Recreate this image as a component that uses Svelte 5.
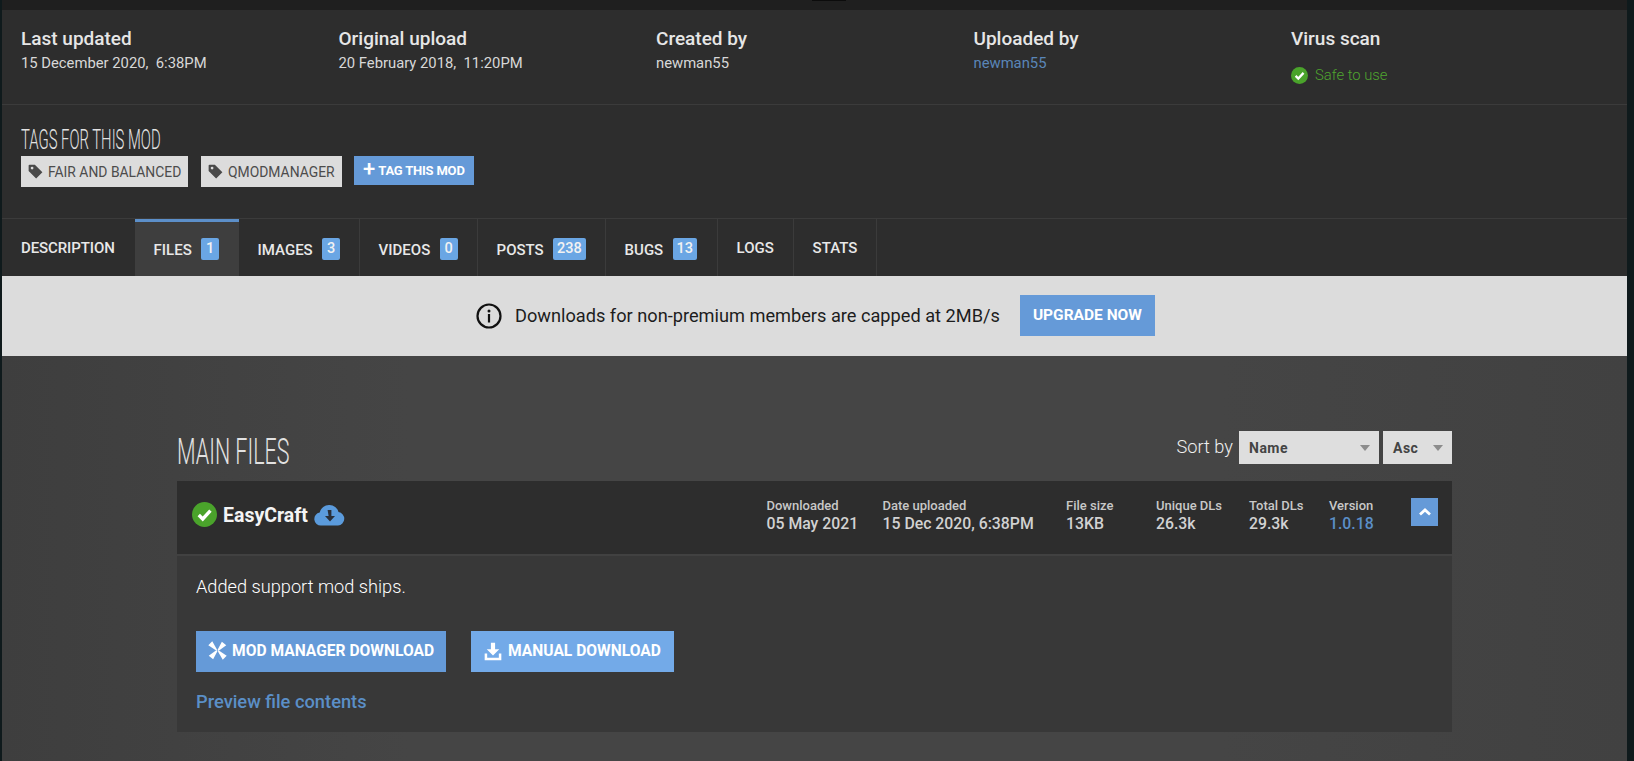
<script>
  const meta = [
    { label: 'Last updated', value: '15 December 2020,  6:38PM' },
    { label: 'Original upload', value: '20 February 2018,  11:20PM' },
    { label: 'Created by', value: 'newman55' },
    { label: 'Uploaded by', value: 'newman55', link: true }
  ];
  const tabs = [
    { name: 'DESCRIPTION', w: 133 },
    { name: 'FILES', count: '1', w: 104, active: true },
    { name: 'IMAGES', count: '3', w: 121 },
    { name: 'VIDEOS', count: '0', w: 118 },
    { name: 'POSTS', count: '238', w: 128 },
    { name: 'BUGS', count: '13', w: 112 },
    { name: 'LOGS', w: 76 },
    { name: 'STATS', w: 83 }
  ];
  const stats = [
    { label: 'Downloaded', value: '05 May 2021', w: 116 },
    { label: 'Date uploaded', value: '15 Dec 2020, 6:38PM', w: 183.5 },
    { label: 'File size', value: '13KB', w: 90 },
    { label: 'Unique DLs', value: '26.3k', w: 93 },
    { label: 'Total DLs', value: '29.3k', w: 80 },
    { label: 'Version', value: '1.0.18', w: 82, link: true }
  ];
</script>

<div class="page">
  <div class="topbar"><span class="topbar-mark"></span></div>
  <section class="meta">
    {#each meta as m}
      <div class="meta-col">
        <div class="meta-label">{m.label}</div>
        <div class="meta-value" class:link={m.link}>{m.value}</div>
      </div>
    {/each}
    <div class="meta-col">
      <div class="meta-label">Virus scan</div>
      <div class="safe">
        <svg width="17" height="17" viewBox="0 0 24 24"><circle cx="12" cy="12" r="12" fill="#4aa32b"/><path d="M6.5 12.5l3.8 3.8 7.4-8" fill="none" stroke="#fff" stroke-width="3.2"/></svg>
        <span>Safe to use</span>
      </div>
    </div>
  </section>

  <section class="tags">
    <h2 class="tags-title"><span>TAGS FOR THIS MOD</span></h2>
    <div class="tag-row">
      <span class="chip chip-a">
        <svg width="15" height="15" viewBox="0 0 24 24"><path d="M1 2.5A1.5 1.5 0 0 1 2.5 1H11l12 12-10 10L1 11z" fill="#4a4a4a"/><circle cx="6.5" cy="6.5" r="2.2" fill="#dcdcdc"/></svg>
        FAIR AND BALANCED
      </span>
      <span class="chip chip-b">
        <svg width="15" height="15" viewBox="0 0 24 24"><path d="M1 2.5A1.5 1.5 0 0 1 2.5 1H11l12 12-10 10L1 11z" fill="#4a4a4a"/><circle cx="6.5" cy="6.5" r="2.2" fill="#dcdcdc"/></svg>
        QMODMANAGER
      </span>
      <span class="add-tag"><b>+</b><i>TAG THIS MOD</i></span>
    </div>
  </section>

  <nav class="tabs">
    {#each tabs as t}
      <div class="tab" class:active={t.active} class:plain={!t.count} style="width:{t.w}px">
        <span>{t.name}</span>
        {#if t.count}<em>{t.count}</em>{/if}
      </div>
    {/each}
  </nav>

  <section class="banner">
    <svg width="26" height="26" viewBox="0 0 26 26"><circle cx="13" cy="13" r="11.5" fill="none" stroke="#111" stroke-width="2.2"/><circle cx="13" cy="8" r="1.5" fill="#111"/><rect x="11.9" y="11" width="2.2" height="8.5" fill="#111"/></svg>
    <span class="banner-text">Downloads for non-premium members are capped at 2MB/s</span>
    <span class="upgrade">UPGRADE NOW</span>
  </section>

  <main class="main">
    <div class="files">
      <div class="files-head">
        <h2 class="files-title"><span>MAIN FILES</span></h2>
        <div class="sort">
          <span class="sort-label">Sort by</span>
          <span class="select sel-name">Name<i></i></span>
          <span class="select sel-order">Asc<i></i></span>
        </div>
      </div>
      <article class="card">
        <header class="card-head">
          <svg class="check" width="25" height="25" viewBox="0 0 24 24"><circle cx="12" cy="12" r="12" fill="#4aa32b"/><path d="M6.5 12.5l3.8 3.8 7.4-8" fill="none" stroke="#fff" stroke-width="3.2"/></svg>
          <span class="file-name">EasyCraft</span>
          <svg class="cloud" width="31" height="22" viewBox="0 0 31 22"><path d="M7 21.5a6.5 6.5 0 0 1-1.3-12.9A9.5 9.5 0 0 1 15.5 1a9.3 9.3 0 0 1 9 7A6.8 6.8 0 0 1 24 21.5z" fill="#5b9bdc"/><path d="M13.6 6h3.8v6h3.6l-5 5.5-5-5.5h3.6z" fill="#2a2f38"/></svg>
          <div class="stats">
            {#each stats as s}
              <div class="stat" style="width:{s.w}px">
                <div class="stat-label">{s.label}</div>
                <div class="stat-value" class:link={s.link}>{s.value}</div>
              </div>
            {/each}
          </div>
          <span class="collapse">
            <svg width="14" height="10" viewBox="0 0 14 10"><path d="M2 7.5l5-4.5 5 4.5" fill="none" stroke="#fff" stroke-width="2.8"/></svg>
          </span>
        </header>
        <div class="card-body">
          <p class="desc">Added support mod ships.</p>
          <div class="actions">
            <span class="btn btn-mod">
              <svg width="21" height="21" viewBox="0 0 24 24"><g fill="#fff"><path d="M1.5 6L6 1.5l5.5 9.500-1 1z"/><path d="M17 2l5 4-9 6.500-1-1z"/><path d="M22.500 18L18 22.500l-5.500-9.500 1-1z"/><path d="M7 22l-5-4 9-6.500 1 1z"/></g></svg>
              MOD MANAGER DOWNLOAD
            </span>
            <span class="btn btn-manual">
              <svg width="20" height="20" viewBox="0 0 24 24"><path d="M9.5 2h5v8h5L12 17.5 4.5 10h5z" fill="#fff"/><path d="M2 15h3v5h14v-5h3v8H2z" fill="#fff"/></svg>
              MANUAL DOWNLOAD
            </span>
          </div>
          <div class="preview">Preview file contents</div>
        </div>
      </article>
    </div>
  </main>
</div>

<style>
  :global(body) {
    margin: 0;
    background: #0f1a1c;
    overflow: hidden;
  }
  .page {
    width: 1625px;
    height: 761px;
    margin-left: 2px;
    overflow: hidden;
    font-family: Roboto, "Liberation Sans", sans-serif;
    background: #2d2d2d;
    color: #eaeaea;
  }
  .topbar {
    display: flex;
    height: 10px;
    background: #1f1f1f;
  }
  .topbar-mark {
    width: 34px;
    height: 1px;
    margin-left: 810px;
    background: #0c0c0c;
  }
  .meta {
    display: grid;
    grid-template-columns: repeat(5, 317.5px);
    height: 95px;
    box-sizing: border-box;
    padding: 17px 0 0 19px;
    border-bottom: 1px solid #3b3b3b;
  }
  .meta-label {
    font-size: 19px;
    font-weight: 500;
    line-height: 24px;
    color: #e6e6e6;
  }
  .meta-value {
    margin-top: 2px;
    font-size: 14.8px;
    line-height: 20px;
    white-space: pre;
    color: #d8d8d8;
  }
  .meta-value.link { color: #5a86b8; }
  .safe {
    display: flex;
    align-items: center;
    gap: 7px;
    margin-top: 14px;
    font-size: 14.8px;
    font-weight: 300;
    line-height: 20px;
    color: #4fa52f;
  }
  .tags {
    height: 114px;
    box-sizing: border-box;
    padding: 20px 0 0 19px;
    border-bottom: 1px solid #3b3b3b;
  }
  .tags-title, .files-title {
    margin: 0;
    font-weight: 300;
    color: #e2e2e2;
  }
  .tags-title {
    font-size: 27px;
    line-height: 30px;
    height: 30px;
    white-space: nowrap;
  }
  .tags-title span {
    display: inline-block;
    transform: scaleX(0.55);
    transform-origin: left center;
  }
  .tag-row {
    display: flex;
    align-items: flex-start;
    margin-top: 1px;
  }
  .chip {
    display: flex;
    align-items: center;
    box-sizing: border-box;
    height: 31px;
    gap: 5px;
    padding-left: 7px;
    background: #dcdcdc;
    color: #4c4c4c;
    font-size: 13.9px;
  }
  .chip-a { width: 167px; margin-right: 13px; }
  .chip-b { width: 141px; margin-right: 12px; }
  .add-tag {
    display: flex;
    align-items: center;
    box-sizing: border-box;
    width: 120px;
    height: 29px;
    padding-left: 9px;
    background: #659ad8;
    color: #fff;
    font-size: 13px;
    font-weight: 700;
  }
  .add-tag b {
    font-size: 22px;
    line-height: 20px;
    font-weight: 500;
    margin: -4px 3px 0 0;
  }
  .add-tag i { font-style: normal; letter-spacing: -0.2px; }
  .tabs {
    display: flex;
    height: 57px;
  }
  .tab {
    display: flex;
    align-items: center;
    box-sizing: border-box;
    gap: 9.4px;
    padding: 4px 0 0 18.6px;
    border-right: 1px solid #3b3b3b;
    font-size: 15px;
    font-weight: 500;
    color: #e8e8e8;
    white-space: nowrap;
  }
  .tab.plain { padding-top: 0; }
  .tab:first-child { padding-left: 19px; border-right: 0; letter-spacing: -0.1px; }
  .tab.active {
    background: #3e3e3e;
    border-top: 3px solid #5c8fc9;
    padding-top: 1px;
    border-right: 0;
  }
  .tab em {
    display: block;
    min-width: 18px;
    box-sizing: border-box;
    padding: 0 4px;
    height: 22px;
    line-height: 22px;
    border-radius: 2px;
    background: #6aa6e4;
    color: #f2f2f2;
    font-style: normal;
    font-size: 14.5px;
    text-align: center;
    font-weight: 500;
    margin-top: -2px;
  }
  .banner {
    display: flex;
    align-items: center;
    box-sizing: border-box;
    height: 80px;
    padding-left: 474px;
    background: #dcdcdc;
    color: #1d1d1d;
  }
  .banner-text {
    margin: -2px 0 0 13px;
    font-size: 18.2px;
  }
  .upgrade {
    display: block;
    box-sizing: border-box;
    width: 135px;
    height: 41px;
    margin: -1px 0 0 20px;
    line-height: 40px;
    text-align: center;
    background: #659ad8;
    color: #fff;
    font-size: 15.5px;
    font-weight: 700;
  }
  .main {
    height: 405px;
    padding: 75px 0 0 175px;
    box-sizing: border-box;
    background: linear-gradient(90deg, #3e3e3e 0%, #454545 25%, #454545 75%, #414141 100%);
  }
  .files { width: 1275px; }
  .files-head {
    display: flex;
    justify-content: space-between;
    height: 50px;
  }
  .files-title {
    font-size: 37px;
    line-height: 42px;
    white-space: nowrap;
  }
  .files-title span {
    display: inline-block;
    transform: scaleX(0.58);
    transform-origin: left center;
  }
  .sort {
    display: flex;
    align-items: flex-start;
    height: 33px;
  }
  .sort-label {
    font-size: 18.2px;
    font-weight: 300;
    line-height: 32px;
    margin-right: 6px;
    color: #f0f0f0;
  }
  .select {
    position: relative;
    display: block;
    box-sizing: border-box;
    height: 33px;
    line-height: 34px;
    padding-left: 10px;
    background: #dedede;
    color: #444;
    font-size: 14px;
    font-weight: 700;
    letter-spacing: 0.5px;
  }
  .select i {
    position: absolute;
    top: 14px;
    right: 9px;
    width: 0;
    height: 0;
    border-left: 5px solid transparent;
    border-right: 5px solid transparent;
    border-top: 6px solid #8c8c8c;
  }
  .sel-name { width: 140px; margin-right: 4px; }
  .sel-order { width: 69px; }
  .card { background: #383838; height: 251px; }
  .card-head {
    display: flex;
    align-items: flex-start;
    box-sizing: border-box;
    height: 75px;
    padding: 17px 14px 0 15px;
    background: #2d2d2d;
    border-bottom: 2px solid #414141;
  }
  .check { flex: none; margin-top: 4px; }
  .file-name {
    margin: 5px 0 0 6px;
    font-size: 19.5px;
    font-weight: 700;
    line-height: 25px;
    color: #f4f4f4;
  }
  .cloud { flex: none; margin: 6px 0 0 6px; }
  .stats {
    display: flex;
    margin-left: auto;
  }
  .stat-label {
    font-size: 13px;
    font-weight: 500;
    line-height: 16px;
    color: #c8c8c8;
  }
  .stat-value {
    font-size: 15.8px;
    font-weight: 500;
    line-height: 19px;
    color: #d2d2d2;
  }
  .stat-value.link { color: #5b8fc7; }
  .collapse {
    display: flex;
    flex: none;
    align-items: center;
    justify-content: center;
    width: 27px;
    height: 28px;
    background: #659ad8;
  }
  .card-body { padding: 19px 0 0 19px; }
  .desc {
    margin: 0;
    font-size: 18.2px;
    font-weight: 300;
    line-height: 24px;
    color: #fff;
  }
  .actions {
    display: flex;
    gap: 25px;
    margin-top: 32px;
  }
  .btn {
    display: flex;
    align-items: center;
    gap: 5px;
    box-sizing: border-box;
    height: 41px;
    padding: 0 0 2px 11px;
    color: #fff;
    font-size: 15.6px;
    font-weight: 700;
    white-space: nowrap;
  }
  .btn-mod { width: 250px; background: #659ad8; gap: 4px; }
  .btn-manual { width: 203px; background: #73aae8; padding-left: 12px; }
  .preview {
    margin-top: 18px;
    font-size: 18.3px;
    font-weight: 500;
    line-height: 24px;
    color: #5b8fc7;
  }
</style>
